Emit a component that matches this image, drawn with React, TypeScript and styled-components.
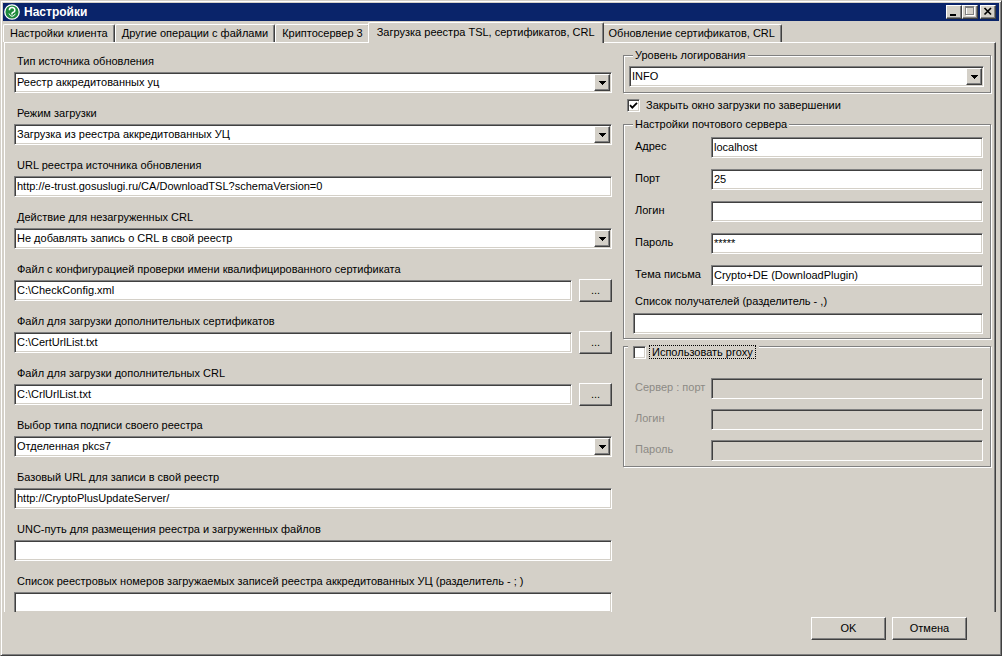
import React from "react";
import styled, { createGlobalStyle, css } from "styled-components";

const GlobalStyle = createGlobalStyle`
  html, body { margin: 0; padding: 0; background: #d4d0c8; }
  body {
    font-family: "Liberation Sans", Arial, sans-serif;
    font-size: 11px;
    color: #000;
  }
  * { box-sizing: border-box; }
`;

const raised = css`
  border: 1px solid;
  border-color: #ffffff #404040 #404040 #ffffff;
  box-shadow: inset -1px -1px 0 #808080;
  background: #d4d0c8;
`;

const sunken = css`
  border: 1px solid;
  border-color: #808080 #ffffff #ffffff #808080;
  box-shadow: inset 1px 1px 0 #404040, inset -1px -1px 0 #d4d0c8;
`;

const Window = styled.div`
  width: 1002px;
  height: 656px;
  display: flex;
  flex-direction: column;
  background: #d4d0c8;
  border: 1px solid;
  border-color: #d4d0c8 #404040 #404040 #d4d0c8;
  box-shadow: inset 1px 1px 0 #ffffff, inset -1px -1px 0 #808080;
  padding: 2px;
  overflow: hidden;
`;

const TitleBar = styled.div`
  flex: none;
  height: 18px;
  background: #0a246a;
  display: flex;
  align-items: center;
  padding: 0 3px 0 1px;
  color: #fff;
`;

const TitleText = styled.div`
  font-weight: bold;
  font-size: 12px;
  margin-left: 4px;
  flex: 1;
`;

const CaptionButtons = styled.div`
  display: flex;
  align-items: center;
`;

const CaptionButton = styled.div<{ $gap?: number }>`
  ${raised};
  width: 16px;
  height: 14px;
  margin-left: ${(p) => p.$gap ?? 0}px;
  display: flex;
  align-items: center;
  justify-content: center;
  svg { display: block; }
`;

const TabStrip = styled.div`
  flex: none;
  height: 20px;
  margin-top: 1px;
  display: flex;
  align-items: flex-end;
`;

const Tab = styled.div<{ $active?: boolean }>`
  height: 18px;
  padding: 0 6px;
  border-top: 1px solid #ffffff;
  border-left: 1px solid #ffffff;
  border-right: 1px solid #404040;
  box-shadow: inset -1px 0 0 #808080;
  border-radius: 2px 2px 0 0;
  line-height: 16px;
  white-space: nowrap;
  background: #d4d0c8;
  ${(p) =>
    p.$active &&
    css`
      height: 21px;
      margin: 0 -2px -1px -2px;
      padding: 0 8px;
      position: relative;
      z-index: 1;
      line-height: 18px;
    `}
`;

const Panel = styled.div`
  flex: none;
  height: 570px;
  margin: 0 3px 0 1px;
  border-top: 1px solid #ffffff;
  border-left: 1px solid #ffffff;
  border-right: 1px solid #404040;
  box-shadow: inset -1px 0 0 #808080;
  padding: 5px 4px 0 9px;
  display: grid;
  grid-template-columns: 598px 368px;
  column-gap: 11px;
  align-items: start;
  overflow: hidden;
`;

const LeftCol = styled.div`
  display: flex;
  flex-direction: column;
  gap: 13px;
  padding-top: 6px;
`;

const Field = styled.div`
  display: flex;
  flex-direction: column;
  gap: 4px;
`;

const FieldLabel = styled.div`
  height: 14px;
  line-height: 14px;
  padding-left: 3px;
  white-space: nowrap;
`;

const TextBox = styled.div<{ $disabled?: boolean }>`
  ${sunken};
  flex: none;
  height: 21px;
  padding: 0 2px;
  line-height: 19px;
  white-space: nowrap;
  overflow: hidden;
  background: ${(p) => (p.$disabled ? "#d4d0c8" : "#ffffff")};
`;

const FileBox = styled(TextBox)`
  flex: 1;
  min-width: 0;
`;

const ComboBox = styled.div`
  ${sunken};
  height: 21px;
  padding: 1px;
  background: #fff;
  display: flex;
  align-items: stretch;
`;

const ComboText = styled.div`
  flex: 1;
  padding-left: 1px;
  line-height: 17px;
  white-space: nowrap;
  overflow: hidden;
`;

const ComboArrow = styled.div`
  ${raised};
  width: 16px;
  flex: none;
  display: flex;
  align-items: center;
  justify-content: center;
`;

const FileRow = styled.div`
  display: flex;
  align-items: center;
  gap: 7px;
  height: 21px;
`;

const PushButton = styled.button<{ $w: number; $h: number }>`
  ${raised};
  width: ${(p) => p.$w}px;
  height: ${(p) => p.$h}px;
  flex: none;
  padding: 0;
  font-family: inherit;
  font-size: 11px;
  color: #000;
  line-height: 1;
`;

const RightCol = styled.div`
  display: flex;
  flex-direction: column;
`;

const GroupBox = styled.fieldset<{ $pad: string; $mt?: number }>`
  margin: ${(p) => p.$mt ?? 0}px 0 0 0;
  min-width: 0;
  border: 1px solid #808080;
  box-shadow: 1px 1px 0 #ffffff, inset 1px 1px 0 #ffffff;
  padding: ${(p) => p.$pad};
`;

const Legend = styled.legend<{ $indent?: number }>`
  padding: 0 2px;
  margin-left: ${(p) => p.$indent ?? 0}px;
  line-height: 14px;
  height: 14px;
  background: #d4d0c8;
  white-space: nowrap;
`;

const CheckLegend = styled.legend`
  padding: 0 3px 0 5px;
  margin-left: -5px;
  height: 14px;
  background: #d4d0c8;
  position: relative;
  top: 6px;
  display: flex;
  align-items: center;
`;

const CheckRow = styled.div`
  margin: 5px 0 0 4px;
  height: 14px;
  display: flex;
  align-items: center;
  gap: 6px;
  line-height: 14px;
`;

const CheckBox = styled.div`
  ${sunken};
  width: 13px;
  height: 13px;
  background: #fff;
  flex: none;
  display: flex;
  align-items: center;
  justify-content: center;
`;

const FocusText = styled.span`
  margin-left: 3px;
  padding: 0 2px;
  border: 1px dotted #000;
  line-height: 12px;
  white-space: nowrap;
`;

const FormGrid = styled.div<{ $gap: number }>`
  display: grid;
  grid-template-columns: 78px 1fr;
  row-gap: ${(p) => p.$gap}px;
`;

const RowLabel = styled.div<{ $disabled?: boolean }>`
  padding: 2px 0 0 2px;
  line-height: 14px;
  white-space: nowrap;
  color: ${(p) => (p.$disabled ? "#8c8a85" : "#000")};
`;

const WideLabel = styled.div`
  margin: 8px 0 5px 2px;
  line-height: 14px;
  white-space: nowrap;
`;

const Footer = styled.div`
  flex: none;
  height: 41px;
  display: flex;
  justify-content: flex-end;
  align-items: flex-start;
  gap: 6px;
  padding: 5px 32px 0 0;
`;

const Arrow = () => (
  <svg width="7" height="4" viewBox="0 0 7 4" shapeRendering="crispEdges">
    <polygon points="0,0 7,0 3.5,4" fill="#000" />
  </svg>
);

const Check = () => (
  <svg width="9" height="9" viewBox="0 0 9 9">
    <path d="M1 4.2 L3.3 6.6 L8 1.8" fill="none" stroke="#000" strokeWidth="1.8" />
  </svg>
);

const AppIcon = () => (
  <svg width="16" height="16" viewBox="0 0 16 16">
    <circle cx="8" cy="8" r="7.2" fill="#1e8a3c" stroke="#ffffff" strokeWidth="1.3" />
    <path d="M5.4 6.2 A2.7 2.6 0 1 1 8.6 8.6 L8 9.2 L8 10.6" fill="none" stroke="#fff" strokeWidth="1.5" />
    <path d="M5 9.5 Q6.5 12.5 8 12.3 Q10.5 12 11.3 9.8" fill="none" stroke="#fff" strokeWidth="1" />
  </svg>
);

type Kind = "combo" | "text" | "file";
const leftFields: { label: string; kind: Kind; value: string }[] = [
  { label: "Тип источника обновления", kind: "combo", value: "Реестр аккредитованных уц" },
  { label: "Режим загрузки", kind: "combo", value: "Загрузка из реестра аккредитованных УЦ" },
  { label: "URL реестра источника обновления", kind: "text", value: "http://e-trust.gosuslugi.ru/CA/DownloadTSL?schemaVersion=0" },
  { label: "Действие для незагруженных CRL", kind: "combo", value: "Не добавлять запись о CRL в свой реестр" },
  { label: "Файл с конфигурацией проверки имени квалифицированного сертификата", kind: "file", value: "C:\\CheckConfig.xml" },
  { label: "Файл для загрузки дополнительных сертификатов", kind: "file", value: "C:\\CertUrlList.txt" },
  { label: "Файл для загрузки дополнительных CRL", kind: "file", value: "C:\\CrlUrlList.txt" },
  { label: "Выбор типа подписи своего реестра", kind: "combo", value: "Отделенная pkcs7" },
  { label: "Базовый URL для записи в свой реестр", kind: "text", value: "http://CryptoPlusUpdateServer/" },
  { label: "UNC-путь для размещения реестра и загруженных файлов", kind: "text", value: "" },
  { label: "Список реестровых номеров загружаемых записей реестра аккредитованных УЦ (разделитель - ; )", kind: "text", value: "" },
];

const mailRows = [
  { label: "Адрес", value: "localhost" },
  { label: "Порт", value: "25" },
  { label: "Логин", value: "" },
  { label: "Пароль", value: "*****" },
  { label: "Тема письма", value: "Crypto+DE (DownloadPlugin)" },
];

const proxyRows = ["Сервер : порт", "Логин", "Пароль"];

const tabs = [
  "Настройки клиента",
  "Другие операции с файлами",
  "Криптосервер 3",
  "Загрузка реестра TSL, сертификатов, CRL",
  "Обновление сертификатов, CRL",
];

const Combo = ({ value }: { value: string }) => (
  <ComboBox>
    <ComboText>{value}</ComboText>
    <ComboArrow>
      <Arrow />
    </ComboArrow>
  </ComboBox>
);

export default function App() {
  return (
    <>
      <GlobalStyle />
      <Window>
        <TitleBar>
          <AppIcon />
          <TitleText>Настройки</TitleText>
          <CaptionButtons>
            <CaptionButton>
              <svg width="14" height="12" viewBox="0 0 14 12" shapeRendering="crispEdges">
                <rect x="3" y="8" width="6" height="2" fill="#000" />
              </svg>
            </CaptionButton>
            <CaptionButton>
              <svg width="14" height="12" viewBox="0 0 14 12" shapeRendering="crispEdges">
                <rect x="3.5" y="1.5" width="8" height="8" fill="none" stroke="#fff" />
                <rect x="2.5" y="0.5" width="8" height="8" fill="none" stroke="#808080" />
                <rect x="2" y="1" width="9" height="1" fill="#808080" />
              </svg>
            </CaptionButton>
            <CaptionButton $gap={2}>
              <svg width="14" height="12" viewBox="0 0 14 12">
                <path d="M3.5 2 L10 8.5 M10 2 L3.5 8.5" stroke="#000" strokeWidth="1.7" />
              </svg>
            </CaptionButton>
          </CaptionButtons>
        </TitleBar>

        <TabStrip>
          {tabs.map((t, i) => (
            <Tab key={t} $active={i === 3}>
              {t}
            </Tab>
          ))}
        </TabStrip>

        <Panel>
          <LeftCol>
            {leftFields.map((f) => (
              <Field key={f.label}>
                <FieldLabel>{f.label}</FieldLabel>
                {f.kind === "combo" && <Combo value={f.value} />}
                {f.kind === "text" && <TextBox>{f.value}</TextBox>}
                {f.kind === "file" && (
                  <FileRow>
                    <FileBox>{f.value}</FileBox>
                    <PushButton $w={33} $h={23}>...</PushButton>
                  </FileRow>
                )}
              </Field>
            ))}
          </LeftCol>

          <RightCol>
            <GroupBox $pad="4px 6px 5px 5px">
              <Legend $indent={4}>Уровень логирования</Legend>
              <Combo value="INFO" />
            </GroupBox>

            <CheckRow>
              <CheckBox>
                <Check />
              </CheckBox>
              <span>Закрыть окно загрузки по завершении</span>
            </CheckRow>

            <GroupBox $pad="6px 7px 4px 9px" $mt={5}>
              <Legend $indent={0}>Настройки почтового сервера</Legend>
              <FormGrid $gap={11}>
                {mailRows.map((r) => (
                  <React.Fragment key={r.label}>
                    <RowLabel>{r.label}</RowLabel>
                    <TextBox>{r.value}</TextBox>
                  </React.Fragment>
                ))}
              </FormGrid>
              <WideLabel>Список получателей (разделитель - ,)</WideLabel>
              <TextBox />
            </GroupBox>

            <GroupBox $pad="25px 7px 5px 9px">
              <CheckLegend>
                <CheckBox />
                <FocusText>Использовать proxy</FocusText>
              </CheckLegend>
              <FormGrid $gap={10}>
                {proxyRows.map((r) => (
                  <React.Fragment key={r}>
                    <RowLabel $disabled>{r}</RowLabel>
                    <TextBox $disabled />
                  </React.Fragment>
                ))}
              </FormGrid>
            </GroupBox>
          </RightCol>
        </Panel>

        <Footer>
          <PushButton $w={75} $h={23}>OK</PushButton>
          <PushButton $w={75} $h={23}>Отмена</PushButton>
        </Footer>
      </Window>
    </>
  );
}
